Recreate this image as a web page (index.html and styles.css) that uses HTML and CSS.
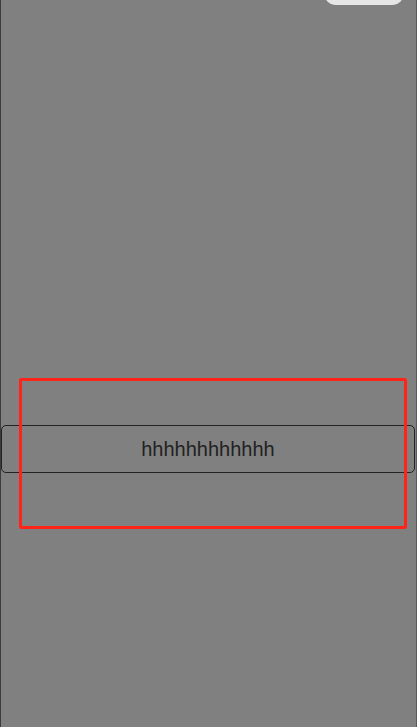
FILE: index.html
```html
<!DOCTYPE html>
<html lang="en">
<head>
    <meta charset="UTF-8">
    <meta name="viewport" content="width=device-width, initial-scale=1.0">
    <title>Input</title>
    <link rel="stylesheet" href="styles.css">
</head>
<body>
    <div class="screen">
        <div class="topbar">
            <button class="pill"></button>
        </div>
        <div class="field-wrap">
            <input class="field" type="text" value="hhhhhhhhhhhh">
            <div class="highlight"></div>
        </div>
    </div>
</body>
</html>
```

FILE: styles.css
```css
  body {
      margin: 0;
      background-color: #808080;
      font-family: "Liberation Sans", Arial, sans-serif;
  }
  .screen {
      position: relative;
      height: 727px;
      width: 417px;
      box-sizing: border-box;
      border-left: 1px solid #3c3c3c;
      border-right: 1px solid #5a5a5a;
      overflow: hidden;
  }
  .topbar {
      display: flex;
      justify-content: flex-end;
      padding-right: 13px;
  }
  .pill {
      width: 78px;
      height: 20px;
      margin-top: -15px;
      border: none;
      border-radius: 10px;
      background-color: #e6e6e6;
  }
  .field-wrap {
      position: relative;
      padding-top: 420px;
  }
  .field {
      display: block;
      width: 414px;
      height: 48px;
      box-sizing: border-box;
      margin: 0;
      border: 1px solid #222;
      border-radius: 5px;
      background: transparent;
      text-align: center;
      font-family: "Liberation Sans", Arial, sans-serif;
      font-size: 20px;
      color: #222;
  }
  .highlight {
      position: absolute;
      left: 18px;
      top: 373px;
      width: 388px;
      height: 151px;
      box-sizing: border-box;
      border: 3px solid #ff2318;
      border-radius: 2px;
  }
```
